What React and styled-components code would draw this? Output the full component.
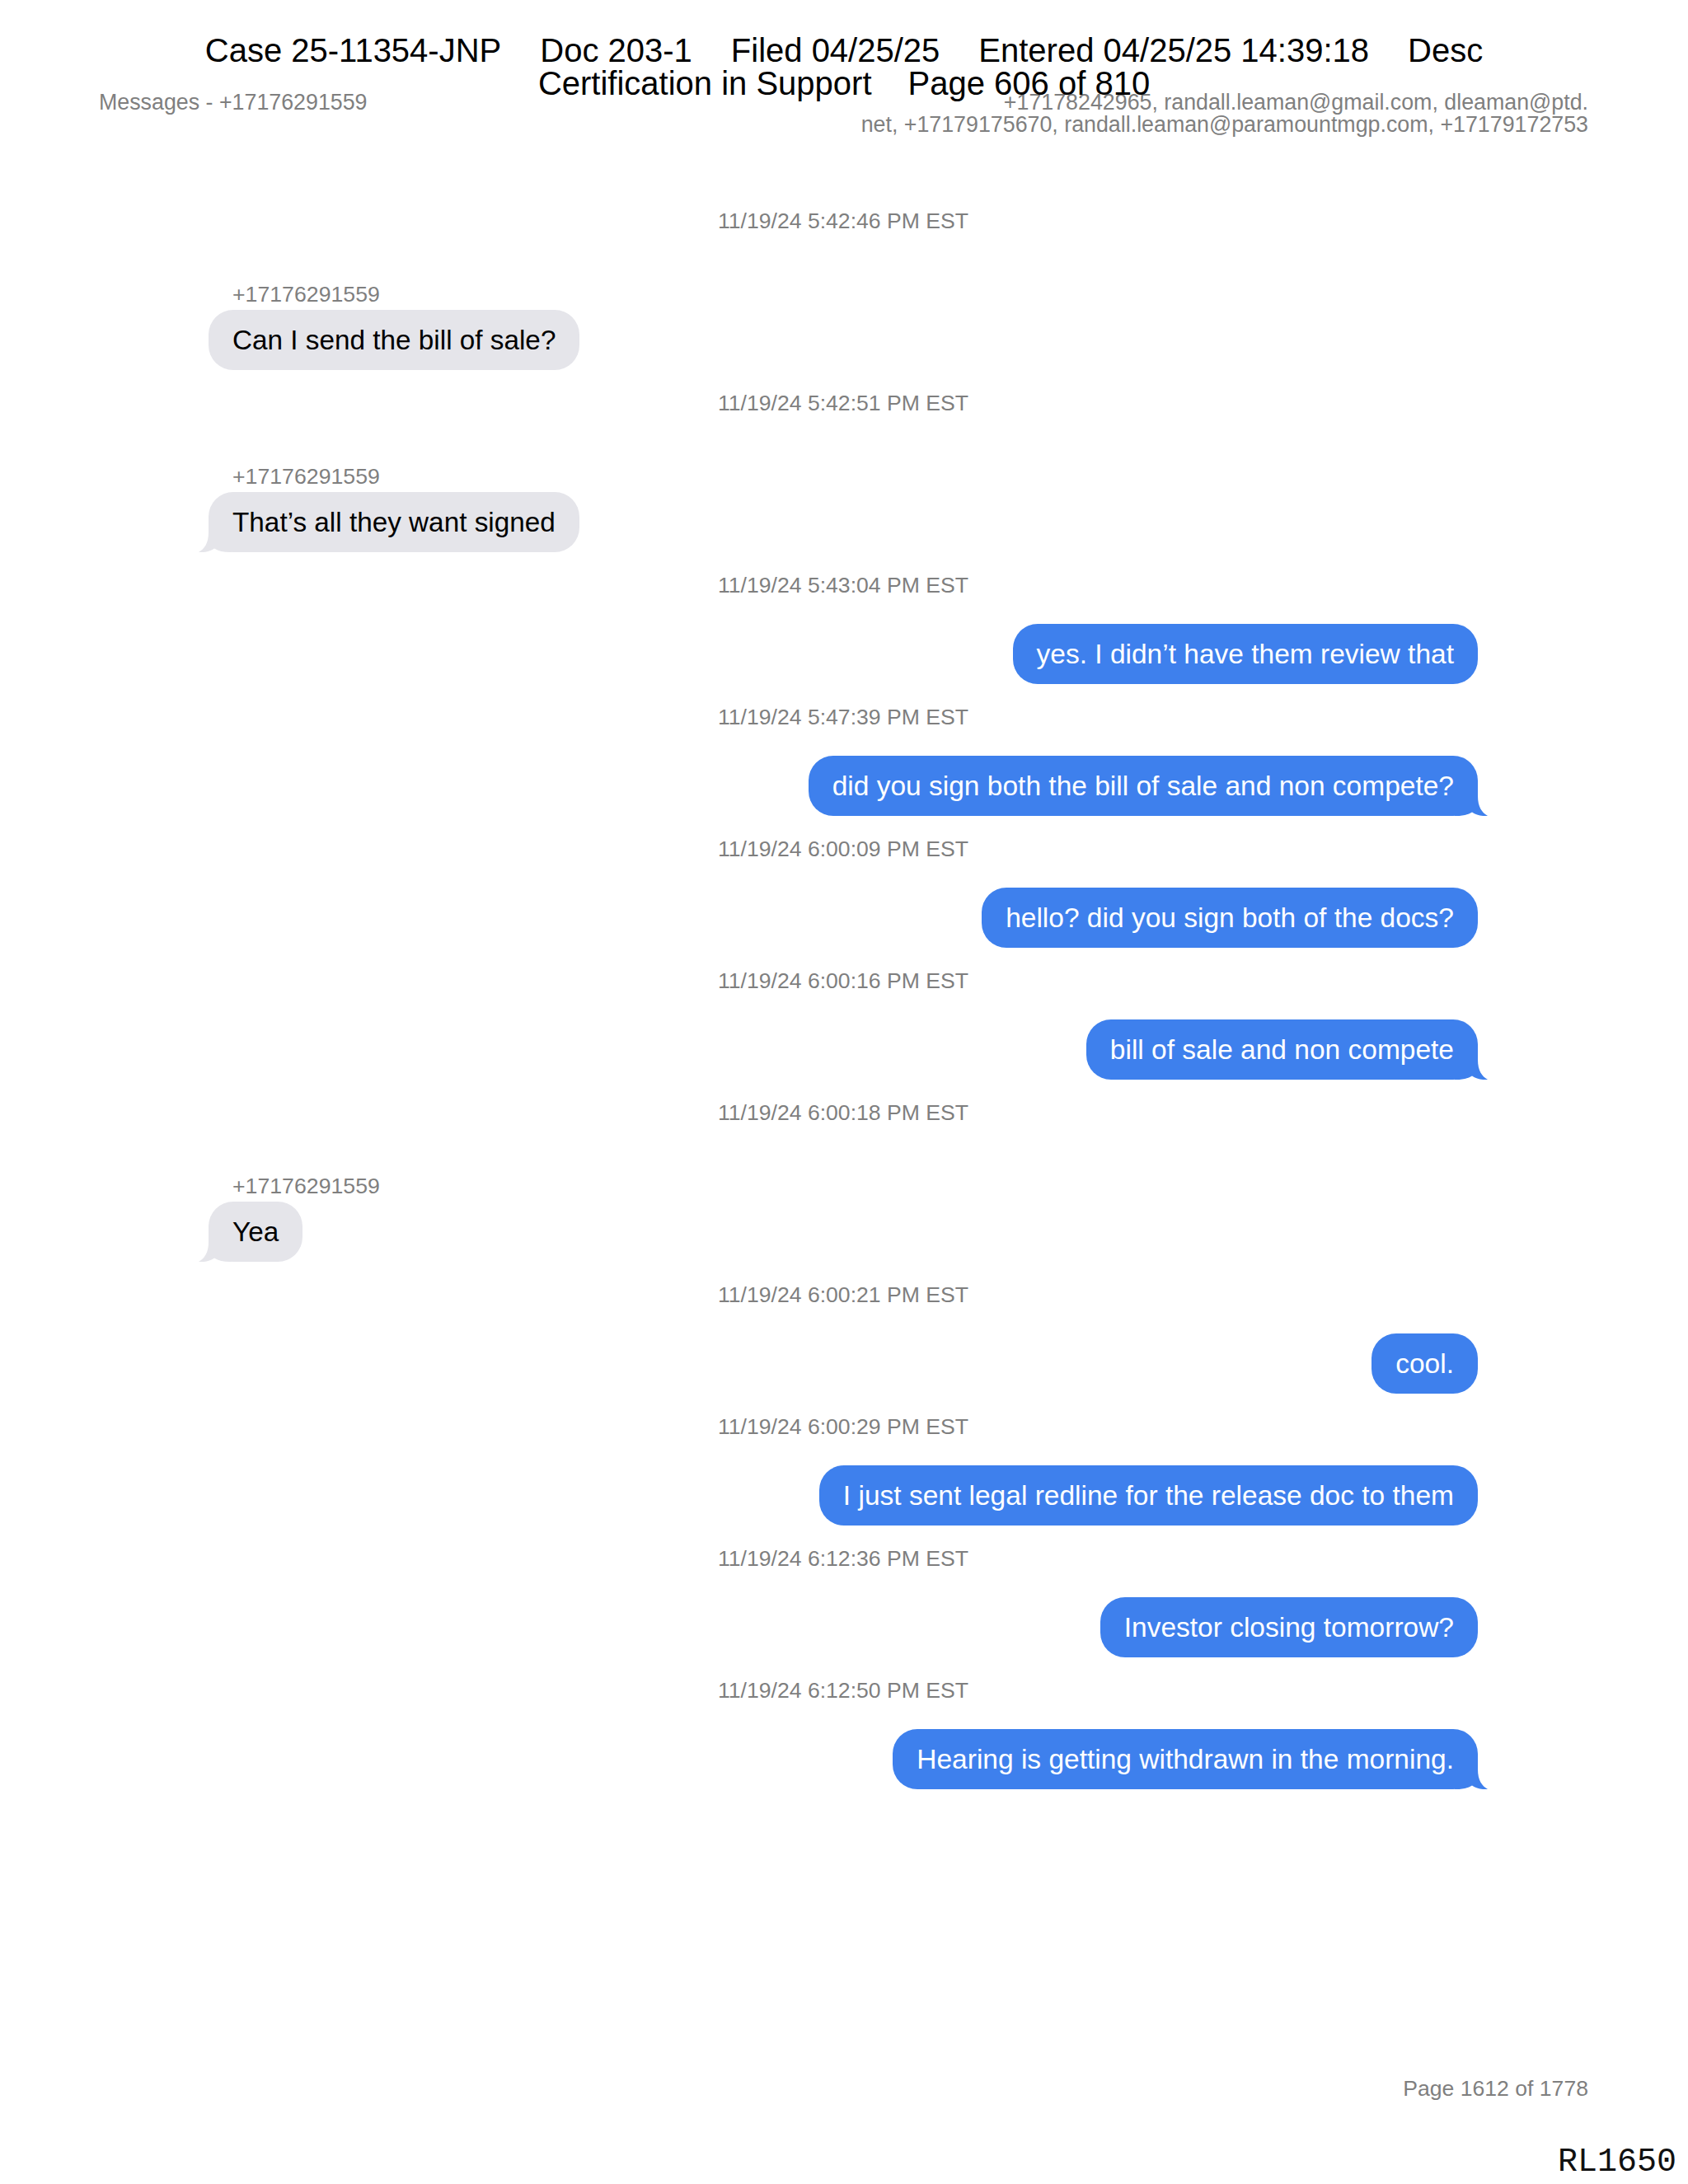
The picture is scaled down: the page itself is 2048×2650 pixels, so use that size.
import React from 'react';
import styled, { createGlobalStyle } from 'styled-components';

const GlobalStyle = createGlobalStyle`
  html, body {
    margin: 0;
    padding: 0;
    background: #ffffff;
  }
  body {
    font-family: "Liberation Sans", Arial, sans-serif;
  }
`;

const Page = styled.div`
  position: relative;
  width: 2048px;
  height: 2650px;
  overflow: hidden;
  display: flex;
  flex-direction: column;
  background: #ffffff;
  font-family: "Liberation Sans", Arial, sans-serif;
`;

const Stamp = styled.div`
  position: absolute;
  top: 41px;
  left: 0;
  right: 0;
  display: flex;
  flex-direction: column;
  align-items: center;
  font-size: 40px;
  line-height: 40px;
  color: #000000;
  pointer-events: none;
`;

const StampLine = styled.div`
  display: flex;
  gap: ${p => p.$gap}px;
  white-space: pre;
`;

const DocHeader = styled.header`
  display: flex;
  justify-content: space-between;
  align-items: flex-start;
  padding: 111px 121px 0 120px;
  font-size: 26.8px;
  line-height: 27px;
  color: #7f7f7f;
`;

const Recipients = styled.div`
  text-align: right;
`;

const Thread = styled.main`
  display: flex;
  flex-direction: column;
  padding: 88px 255px 0 253px;
`;

const Entry = styled.section`
  display: flex;
  flex-direction: column;
  align-items: ${p => (p.$out ? 'flex-end' : 'flex-start')};
  padding-bottom: 25px;
`;

const Timestamp = styled.div`
  align-self: stretch;
  text-align: center;
  font-size: 26.6px;
  line-height: 30px;
  color: #7f7f7f;
  margin-bottom: ${p => (p.$out ? 32 : 59)}px;
`;

const Sender = styled.div`
  font-size: 26.7px;
  line-height: 30px;
  color: #7f7f7f;
  padding-left: 29px;
  margin-bottom: 4px;
`;

const Bubble = styled.div`
  position: relative;
  padding: 17px 29px;
  font-size: ${p => (p.$out ? 33.5 : 33.3)}px;
  line-height: 39px;
  white-space: nowrap;
  border-radius: 30px;
  background: ${p => (p.$out ? '#3e80ed' : '#e5e5ea')};
  color: ${p => (p.$out ? '#ffffff' : '#000000')};
`;

const Tail = styled.svg`
  position: absolute;
  bottom: 0;
  width: 40px;
  height: 40px;
  ${p => (p.$out ? 'right: -12px;' : 'left: -12px; transform: scaleX(-1);')}
`;

const Footer = styled.footer`
  margin-top: auto;
  display: flex;
  flex-direction: column;
  padding-bottom: 4px;
`;

const PageNo = styled.div`
  text-align: right;
  padding-right: 121px;
  font-size: 26.6px;
  line-height: 30px;
  color: #7f7f7f;
`;

const Bates = styled.div`
  align-self: flex-end;
  margin-top: 52px;
  padding-right: 14px;
  font-family: "Liberation Mono", "Courier New", monospace;
  font-size: 40px;
  color: #111111;
`;

const messages = [
  { time: '11/19/24 5:42:46 PM EST', from: '+17176291559', text: 'Can I send the bill of sale?' },
  { time: '11/19/24 5:42:51 PM EST', from: '+17176291559', text: 'That\u2019s all they want signed', tail: true },
  { time: '11/19/24 5:43:04 PM EST', out: true, text: 'yes. I didn\u2019t have them review that' },
  { time: '11/19/24 5:47:39 PM EST', out: true, text: 'did you sign both the bill of sale and non compete?', tail: true },
  { time: '11/19/24 6:00:09 PM EST', out: true, text: 'hello? did you sign both of the docs?' },
  { time: '11/19/24 6:00:16 PM EST', out: true, text: 'bill of sale and non compete', tail: true },
  { time: '11/19/24 6:00:18 PM EST', from: '+17176291559', text: 'Yea', tail: true },
  { time: '11/19/24 6:00:21 PM EST', out: true, text: 'cool.' },
  { time: '11/19/24 6:00:29 PM EST', out: true, text: 'I just sent legal redline for the release doc to them' },
  { time: '11/19/24 6:12:36 PM EST', out: true, text: 'Investor closing tomorrow?' },
  { time: '11/19/24 6:12:50 PM EST', out: true, text: 'Hearing is getting withdrawn in the morning.', tail: true },
];

function BubbleTail({ out }) {
  return (
    <Tail $out={out} viewBox="0 0 40 40" aria-hidden="true">
      <path
        d="M0 0 H28 V16 C28 29 33 36 40 40 C33 40.6 26 39 21 35.5 C16 38.5 10 40 2 40 H0 Z"
        fill={out ? '#3e80ed' : '#e5e5ea'}
      />
    </Tail>
  );
}

export default function App() {
  return (
    <>
      <GlobalStyle />
      <Page>
        <DocHeader>
          <div>Messages - +17176291559</div>
          <Recipients>
            +17178242965, randall.leaman@gmail.com, dleaman@ptd.
            <br />
            net, +17179175670, randall.leaman@paramountmgp.com, +17179172753
          </Recipients>
        </DocHeader>

        <Thread>
          {messages.map((m, i) => (
            <Entry key={i} $out={m.out}>
              <Timestamp $out={m.out}>{m.time}</Timestamp>
              {m.from && <Sender>{m.from}</Sender>}
              <Bubble $out={m.out}>
                {m.text}
                {m.tail && <BubbleTail out={m.out} />}
              </Bubble>
            </Entry>
          ))}
        </Thread>

        <Footer>
          <PageNo>Page 1612 of 1778</PageNo>
          <Bates>RL1650</Bates>
        </Footer>

        <Stamp>
          <StampLine $gap={47}>
            <span>Case 25-11354-JNP</span>
            <span>Doc 203-1</span>
            <span>Filed 04/25/25</span>
            <span>Entered 04/25/25 14:39:18</span>
            <span>Desc</span>
          </StampLine>
          <StampLine $gap={44}>
            <span>Certification in Support</span>
            <span>Page 606 of 810</span>
          </StampLine>
        </Stamp>
      </Page>
    </>
  );
}
